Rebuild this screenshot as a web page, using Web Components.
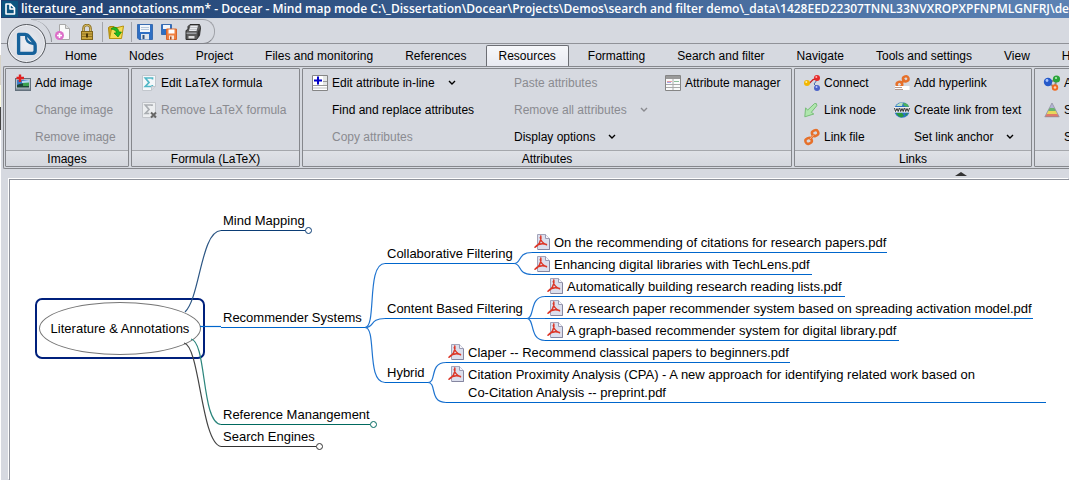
<!DOCTYPE html>
<html lang="en">
<head>
<meta charset="utf-8">
<title>Docear - Mind map mode</title>
<style>
  html, body { margin: 0; height: 100%; overflow: hidden; }
  body { background: #fff; font-family: "Liberation Sans", Arial, sans-serif; font-size: 12px; color: #000; }
</style>
</head>
<body>
<docear-window>
  <title-bar slot="title">literature_and_annotations.mm* - Docear - Mind map mode C:\_Dissertation\Docear\Projects\Demos\search and filter demo\_data\1428EED22307TNNL33NVXROPXPFNPMLGNFRJ\default</title-bar>
  <quick-bar slot="quick"></quick-bar>
  <ribbon-tabs slot="tabs" active="Resources" tabs="Home|Nodes|Project|Files and monitoring|References|Resources|Formatting|Search and filter|Navigate|Tools and settings|View|Help"></ribbon-tabs>

  <ribbon-band slot="ribbon" label="Images" style="--cols: 113px; --pad: 9px">
    <ribbon-item icon="image">Add image</ribbon-item>
    <ribbon-item disabled>Change image</ribbon-item>
    <ribbon-item disabled>Remove image</ribbon-item>
  </ribbon-band>
  <ribbon-band slot="ribbon" label="Formula (LaTeX)" style="--cols: 158px; --pad: 9px">
    <ribbon-item icon="sigma">Edit LaTeX formula</ribbon-item>
    <ribbon-item icon="sigmaoff" disabled>Remove LaTeX formula</ribbon-item>
  </ribbon-band>
  <ribbon-band slot="ribbon" label="Attributes" style="--cols: 182px 171px 126px; --pad: 9px">
    <ribbon-item icon="attr" drop>Edit attribute in-line</ribbon-item>
    <ribbon-item>Find and replace attributes</ribbon-item>
    <ribbon-item disabled>Copy attributes</ribbon-item>
    <ribbon-item disabled>Paste attributes</ribbon-item>
    <ribbon-item disabled drop>Remove all attributes</ribbon-item>
    <ribbon-item drop>Display options</ribbon-item>
    <ribbon-item icon="table">Attribute manager</ribbon-item>
  </ribbon-band>
  <ribbon-band slot="ribbon" label="Links" style="--cols: 90px 137px; --pad: 9px">
    <ribbon-item icon="connect">Connect</ribbon-item>
    <ribbon-item icon="arrow">Link node</ribbon-item>
    <ribbon-item icon="chain">Link file</ribbon-item>
    <ribbon-item icon="hyper">Add hyperlink</ribbon-item>
    <ribbon-item icon="www">Create link from text</ribbon-item>
    <ribbon-item drop>Set link anchor</ribbon-item>
  </ribbon-band>
  <ribbon-band slot="ribbon" label="Nodes" style="--cols: 150px; --pad: 9px">
    <ribbon-item icon="balls">Add connector</ribbon-item>
    <ribbon-item icon="pyramid">Summary node</ribbon-item>
    <ribbon-item>Set cloud</ribbon-item>
  </ribbon-band>

  <mind-map>
    <map-root x="25" y="118">Literature &amp; Annotations</map-root>
    <map-node x="211" y="51" color="#0b3d75" w="84" fold>Mind Mapping</map-node>
    <map-node x="211" y="148" color="#0066cc" w="144">Recommender Systems</map-node>
    <map-node x="211" y="245" color="#00695f" w="147" fold>Reference Manangement</map-node>
    <map-node x="211" y="267" color="#333" w="95" fold>Search Engines</map-node>
    <map-node x="375" y="84" color="#0066cc" w="129">Collaborative Filtering</map-node>
    <map-node x="375" y="139" color="#0066cc" w="142">Content Based Filtering</map-node>
    <map-node x="375" y="203" color="#0066cc" w="43">Hybrid</map-node>
    <map-node x="522" y="73" color="#0066cc" w="355" pdf>On the recommending of citations for research papers.pdf</map-node>
    <map-node x="522" y="95" color="#0066cc" w="280" pdf>Enhancing digital libraries with TechLens.pdf</map-node>
    <map-node x="535" y="117" color="#0066cc" w="300" pdf>Automatically building research reading lists.pdf</map-node>
    <map-node x="535" y="139" color="#0066cc" w="488" pdf>A research paper recommender system based on spreading activation model.pdf</map-node>
    <map-node x="535" y="161" color="#0066cc" w="354" pdf>A graph-based recommender system for digital library.pdf</map-node>
    <map-node x="436" y="183" color="#0066cc" w="344" pdf>Claper -- Recommend classical papers to beginners.pdf</map-node>
    <map-node x="436" y="205" color="#0066cc" w="600" pdf>Citation Proximity Analysis (CPA) - A new approach for identifying related work based on<br>Co-Citation Analysis -- preprint.pdf</map-node>
  </mind-map>
</docear-window>

<script>
const ICONS = {
  logo: `<path stroke="#17629b" stroke-width="2.800" stroke-linejoin="round" d="M3 2h5.500q2 0 3 1.500l4.500 5.500q.8 1 .8 2.500v4q0 2.300-2.300 2.300H3z"/><path stroke="#17629b" stroke-width="2" d="M9.300 3c-.5 4 1.500 6.500 6.500 7"/>`,
  newdoc: `<path fill="#fafafa" stroke="#a8a8a8" d="M4.500.5h6l4 4v11h-10z"/><path fill="#ddd" stroke="#aaa" d="M10.500.5v4h4"/><circle cx="4.500" cy="11.500" r="4.500" fill="#dd6fc8"/><path stroke="#fff" stroke-width="1.600" d="M2 11.500h5M4.500 9v5"/>`,
  lock: `<path stroke="#8a6f22" stroke-width="2.600" d="M4.500 8V4.500a3.500 3.500 0 0 1 7 0V8"/><path stroke="#d9bd63" d="M4.500 8V4.500a3.500 3.500 0 0 1 7 0V8"/><rect x="2.500" y="7.500" width="11" height="8" fill="#c9a53c" stroke="#80651b"/><path stroke="#8f7226" d="M3 10h10M3 12.500h10"/><path stroke="#4a3808" stroke-width="2" d="M8 9.500v4"/>`,
  folder: `<path fill="#d3ab1d" stroke="#a98508" d="M.5 3.500l1.500-1h4l1 1h5v11H1.500z"/><path fill="#f5dc54" stroke="#b8930d" d="M3.500 5l12-3-2 12.500h-12z"/><path fill="#20b820" stroke="#087e10" stroke-width=".6" d="M3 5c3-3 7-2 8 3h2.500L10 13 6 9h2.300c0-2.500-2-3.500-5.300-4z"/>`,
  save: `<path fill="#2e6fc4" stroke="#3a6cb0" d="M.5.5h15v15H2l-1.500-1.500z"/><rect x="3" y="1" width="10" height="7" fill="#f2f6fb"/><path stroke="#b6c7dc" d="M4 3.500h8M4 5.500h8"/><rect x="4" y="10" width="8" height="5.500" fill="#dfe5ec"/><rect x="5.500" y="11" width="2" height="4" fill="#31527e"/>`,
  saveall: `<path fill="#2e6fc4" stroke="#3a6cb0" d="M.5.5h10v10H.5z"/><rect x="2" y="1" width="7" height="4" fill="#f2f6fb"/><path fill="#f08040" stroke="#d8662c" d="M5.500 5h10v10.500h-10z"/><rect x="7.500" y="5.500" width="6" height="4" fill="#fff"/><rect x="8" y="11.500" width="5" height="4" fill="#f8e7dd"/><rect x="9" y="12.500" width="1.500" height="3" fill="#a34a1d"/>`,
  print: `<path fill="#5b5b5b" stroke="#2d2d2d" d="M1 6.500l2-1V2.500l2-2h9.500l1 3-1 8-3 4H1z"/><path fill="#e8eaee" d="M5.500 1.500H13l-1.500 5.500H4z"/><path stroke="#c2c4c8" d="M5 3.500h7M5 5.500h7"/><path fill="#9a9ca0" d="M1.500 8.500h10v1.500h-10z"/><path fill="#ddd" d="M3.500 12h6v2.500h-6z"/><path fill="#333" d="M12.500 8l2-3v6l-2 3z"/>`,
  image: `<rect x=".5" y="3.500" width="15" height="12" fill="#b8c2ca" stroke="#63707c"/><path fill="#3b7cc8" d="M2 5h12v5H2z"/><path fill="#b5daf3" d="M7 6l7-1v3H7z"/><path fill="#1b4638" d="M2 10q5-3 12-1v3.500H2z"/><path fill="#3ba04f" d="M8 8l6-.5V11H8z"/><path fill="#7d8c97" d="M1 13.500h14V15H1z"/><path stroke="#e02020" stroke-width="2.400" d="M1.500 3h7.500M5-.5v7.500"/>`,
  sigma: `<path fill="#f5f8fa" stroke="#c2c7cd" d="M1.500.5h13v11l-4 4h-9z"/><path stroke="#51b7c6" stroke-width="1.700" d="M11.500 4.500V3H4.300L8 7.500l-3.700 4h7V10"/><path fill="#d6dae0" stroke="#c2c7cd" d="M10.500 15.500v-4h4"/>`,
  sigmaoff: `<path fill="#eceef0" stroke="#c2c5ca" d="M1.500.5h13v15h-13z"/><path stroke="#aaaeb2" stroke-width="1.700" d="M11 4V3H4.300L8 7.500l-3.700 4h4"/><path stroke="#666" stroke-width="2" d="M10 10.500l5 5M15 10.500l-5 5"/>`,
  attr: `<path fill="#e4e6e6" stroke="#858585" d="M.5.5h15v15H.5z"/><path stroke="#999" d="M1 10.500h14M1 13h14M11 6.500h4"/><path fill="#fff" d="M1 1h10v9H1zM1 11h14v1.500H1zM1 13.500h14V15H1z"/><path stroke="#0000c8" stroke-width="2" d="M2 5.500h8M6 1.500v8"/>`,
  table: `<path fill="#fafafa" stroke="#858585" d="M.5.5h15v15H.5z"/><path fill="#9a9a9a" d="M1 1h14v3H1z"/><path stroke="#aaa" d="M1 9.500h14M1 12.500h14M8 4v11"/><path stroke="#e9a0a0" d="M2 6.500h5"/><path stroke="#8dbf9b" d="M9 6.500h5"/><path stroke="#a6a6e6" d="M2 7.500h4"/>`,
  connect: `<path stroke="#c22" stroke-width="1.300" d="M3 8.500c5 1 3-5 9-4.500"/><path stroke="#46a" d="M13 5l-3 4 3 3"/><circle cx="3" cy="8" r="3" fill="#f2b600"/><circle cx="2.300" cy="7" r="1" fill="#fff0a0"/><circle cx="13" cy="3" r="3" fill="#e52a2a"/><circle cx="13" cy="13" r="3" fill="#4a62c9"/><circle cx="12.500" cy="12" r="1" fill="#b7c4ff"/><circle cx="12.300" cy="2" r="1" fill="#ffb0b0"/>`,
  arrow: `<path fill="#b0e6ae" stroke="#78bd79" stroke-linejoin="round" d="M.8 14.800l.8-9 2 2.300 7-6.600q2.500-.8 2.200 2.200l-5.500 6.600 2.500 1.700z"/>`,
  chain: `<g stroke="#e6702a" stroke-width="2.400"><rect x="8" y="1.500" width="6.500" height="5.500" rx="2.700" transform="rotate(-25 11 4.500)"/><rect x="1.300" y="9" width="6.500" height="5.500" rx="2.700" transform="rotate(-25 4.800 11.600)"/><path d="M5.500 10.800l5-5.500"/></g><path stroke="#f9b084" d="M5.500 10.500l4.500-5"/>`,
  hyper: `<g stroke="#e6702a" stroke-width="2.400"><rect x="9" y="1.300" width="5.600" height="5" rx="2.500" transform="rotate(-20 12 4)"/><rect x="2.500" y="7" width="5.600" height="5" rx="2.500" transform="rotate(-20 5 9)"/><path d="M6.500 8.500l4.500-4"/></g><path fill="#fff" d="M1 11h14.500v4H1z"/><path stroke="#b79b8f" d="M1 12.500h7M1 14.500h8"/>`,
  www: `<circle cx="8" cy="8" r="7.800" fill="#2b74c4"/><path fill="#b8e0c0" d="M2 4q3-4 7-3.500L8 4H4z"/><path fill="#4db35a" d="M9 1q5 0 6 4l-5-1z"/><path fill="#2a9a3a" d="M2 11h6l2 3-3 1.500q-3-1-5-4.500zM11 12l3-1-2 3z"/><rect y="5" width="16" height="5.600" fill="#eee"/><path stroke="#333" stroke-width="1" d="M.5 6l1 3.500L3 6.500l1.200 3L5.300 6M5.700 6l1 3.500L8 6.500l1.200 3L10.300 6M10.700 6l1 3.500L13 6.500l1.300 3L15.500 6"/>`,
  balls: `<path stroke="#888" stroke-width="2" d="M4 7l8-2-1 8z"/><circle cx="4" cy="7" r="4.200" fill="#2559c9"/><circle cx="12.500" cy="4" r="3.600" fill="#2aa43a"/><circle cx="11" cy="12.500" r="3.200" fill="#ef6a20"/><circle cx="3" cy="5.500" r="1.400" fill="#a9c5ff"/><circle cx="12" cy="3" r="1" fill="#bdf5c2"/><circle cx="11" cy="12.500" r="1.300" fill="#ffd0b0"/>`,
  pyramid: `<path fill="#b3b4d6" d="M8 1l2.500 5h-5z"/><path fill="#6ab56e" d="M5.500 6h5l1.500 3H4z"/><path fill="#e8d75a" d="M4 9h8l1.500 3h-11z"/><path fill="#e07a6a" d="M2.500 12h11l1.500 3H1z"/><path stroke="#8a8a99" stroke-width=".7" d="M8 1L.8 14.800h14.400z"/>`,
  pdf: `<path fill="#dcdfed" stroke="#a3a4ba" d="M3.500.5h8l4 4v11h-12z"/><path stroke="#8586a0" d="M15.500 5v10.500H4"/><path fill="#f6f6fb" stroke="#9a9ab2" d="M11.500.5v4h4"/><path stroke="#dc3526" stroke-width="1.500" stroke-linecap="round" d="M1 13.300c3-1 7-7 5.800-11.300M6.300 3.500c.5 3.500 3 6 6.200 7.200M1.500 12.800c2.500-2.800 6-3.600 10.500-2.500"/>`
};
const icon = (name, size = 16, box = 16) =>
  `<svg width="${size}" height="${size}" viewBox="0 0 ${box} ${box}" fill="none" aria-hidden="true">${ICONS[name] || ''}</svg>`;

const define = (tag, render) => customElements.define(tag, class extends HTMLElement {
  connectedCallback() {
    if (this.shadowRoot) return;
    this.attachShadow({ mode: 'open' }).innerHTML = render(this);
  }
});

define('docear-window', () => `
<style>
  :host { display: flex; height: 100vh; overflow: hidden; background: #fff; }
  .edge { flex: 0 0 1px; background: linear-gradient(#fff 55px, #d8d4c8 55px 85px, #fbfadf 85px 107px, #444 107px 130px, #fff 130px); }
  .frame { flex: 1; min-width: 0; display: flex; flex-direction: column; background: #d6d9e0; }
  header { position: relative; display: flex; flex-direction: column; padding-top: 1px; }
  .app { position: absolute; left: 6px; top: 6px; width: 39px; height: 39px; padding: 0; display: grid; place-items: center;
    border: 1px solid #55585e; border-radius: 50%; background: radial-gradient(#eceef3, #d2d5dd); box-shadow: inset 0 0 0 1px #f2f3f6; }
  .ribbon { display: flex; gap: 2px; margin-left: 2px; padding: 1px; border: 1px solid #85878c; border-right: 0; overflow: hidden; border-radius: 2px 0 0 2px; }
  .split { height: 9px; display: flex; align-items: flex-end; }
  .split button { margin: 0 0 2px 954px; width: 12px; height: 4px; padding: 0; border: 0; background: #333; clip-path: polygon(50% 0, 100% 100%, 0 100%); }
  main { flex: 1; min-height: 0; margin: 1px 0 0 8px; border: solid #8f939c; border-width: 1px 0 0 1px; box-shadow: -1px -1px #fff; background: #fff; overflow: hidden; }
</style>
<div class="edge"></div>
<div class="frame">
  <slot name="title"></slot>
  <header>
    <slot name="quick"></slot>
    <slot name="tabs"></slot>
    <button class="app" aria-label="Application menu">${icon('logo', 24, 20)}</button>
  </header>
  <div class="ribbon"><slot name="ribbon"></slot></div>
  <div class="split"><button aria-label="Collapse toolbar"></button></div>
  <main><slot></slot></main>
</div>`);

define('title-bar', () => `
<style>
  :host { display: flex; align-items: center; gap: 3px; height: 18px; padding-left: 1px; overflow: hidden; white-space: nowrap;
    background: linear-gradient(90deg, #1d3f70, #5c82b4); color: #fff; font: 600 12px/18px "Open Sans", Tahoma, sans-serif; }
  svg { flex: none; background: #0c5580; }
</style>
<svg width="16" height="16" viewBox="0 0 16 16" aria-hidden="true"><path fill="none" stroke="#fff" stroke-width="1.600" stroke-linejoin="round" d="M4 3h4.500l4 4v6H4zM8 3.500V8h4.500"/></svg>
<span><slot></slot></span>`);

define('quick-bar', () => {
  const b = (n, l) => `<button aria-label="${l}">${icon(n)}</button>`;
  return `
<style>
  :host { display: flex; height: 24px; border-bottom: 1px solid #909298; }
  .bar { display: flex; align-items: center; gap: 8px; height: 23px; margin-left: 30px; padding: 0 13px 0 24px; border: 1px solid #a0a2a8; border-left: 0; border-bottom-color: #808288; border-radius: 0 12px 12px 0; position: relative; }
  .bar::before { content: ""; position: absolute; left: 0; top: 0; width: 20px; height: 22px; border-right: 1px solid #909298; border-top-right-radius: 20px 22px; }
  button { border: 0; padding: 0; background: none; display: flex; }
  i { width: 1px; height: 20px; background: #a2a4aa; margin: 0 -3px 0 -1px; }
</style>
<div class="bar">${b('newdoc', 'New')}${b('lock', 'Lock')}<i></i>${b('folder', 'Open')}<i></i>${b('save', 'Save')}${b('saveall', 'Save all')}${b('print', 'Print')}</div>`;
});

define('ribbon-tabs', el => `
<style>
  :host { display: flex; gap: 6px; height: 22px; padding-left: 51px; overflow: hidden; }
  button { flex: none; height: 24px; padding: 0 12px 3px 12px; border: 1px solid transparent; border-width: 1px 1px 0; background: none; font: 12px/18px "Liberation Sans", Arial, sans-serif; margin-top: 1px; border-radius: 2px 2px 0 0; }
  button[aria-selected=true] { border-color: #6c6e74; background: linear-gradient(#f6f7fa, #e6e8f0); }
</style>
${el.getAttribute('tabs').split('|').map(t => `<button role="tab" aria-selected="${t === el.getAttribute('active')}">${t}</button>`).join('')}`);

define('ribbon-band', el => `
<style>
  :host { flex: none; display: flex; flex-direction: column; border: 1px solid #85878c; border-radius: 1px; }
  .items { display: grid; grid-template-rows: repeat(3, 27px); grid-template-columns: var(--cols); grid-auto-flow: column; padding-left: var(--pad); }
  .label { height: 15px; border-top: 1px solid #a5a7ac; background: linear-gradient(#dfe1e6, #d4d7de); text-align: center; line-height: 16px; }
</style>
<div class="items"><slot></slot></div>
<div class="label">${el.getAttribute('label')}</div>`);

define('ribbon-item', el => `
<style>
  :host { display: flex; }
  button { display: flex; align-items: center; gap: 4px; padding: 0; border: 0; background: none; color: #000; white-space: nowrap; font: 12px/16px "Liberation Sans", Arial, sans-serif; }
  button:disabled { color: #8a8b90; }
  svg { flex: none; overflow: visible; }
  .drop { margin-left: 9px; }
</style>
<button ${el.hasAttribute('disabled') ? 'disabled' : ''}>${icon(el.getAttribute('icon'))}<span><slot></slot></span>${
  el.hasAttribute('drop') ? '<svg class="drop" width="8" height="6" viewBox="0 0 8 6" aria-hidden="true"><path fill="none" stroke="currentColor" stroke-width="1.400" d="M1 1l3 3 3-3"/></svg>' : ''}</button>`);

/* Branches share the coordinate space of the nodes placed on the canvas. */
define('mind-map', () => `
<style>
  :host { display: block; position: relative; height: 100%; font-size: 13px; line-height: 18px; }
  svg { position: absolute; left: 0; top: 0; width: 100%; height: 100%; fill: none; stroke: #1f74d0; stroke-width: 1.200; }
</style>
<slot></slot>
<svg aria-hidden="true"><g>
  <path stroke="#2c5684" d="M175 132C190 118 191 51 211 50.500"/>
  <path stroke="#0066cc" d="M190 146.500h21"/>
  <path stroke="#2b857c" d="M181 159C197 162 191 243 211 244.500"/>
  <path stroke="#444" d="M174 163C190 166 191 263 211 266.500"/>
  <path d="M355 147.500C367 147.500 356 83.500 375 83.500"/>
  <path d="M355 147.500C365 147.500 359 138.500 375 138.500"/>
  <path d="M355 147.500C367 147.500 356 202.500 375 202.500"/>
  <path d="M504 83.500C512 83.500 507 72.500 522 72.500M504 83.500C512 83.500 507 94.500 522 94.500"/>
  <path d="M517 138.500C525 138.500 519 116.500 535 116.500M517 138.500h18M517 138.500C525 138.500 519 160.500 535 160.500"/>
  <path d="M418 202.500C427 202.500 419 182.500 436 182.500M418 202.500C427 202.500 419 222.500 436 222.500"/>
</g></svg>`);

define('map-root', el => `
<style>
  :host { position: absolute; left: ${el.getAttribute('x')}px; top: ${el.getAttribute('y')}px; padding: 2px; border: 2px solid #00207c; border-radius: 7px; }
  div { width: 160px; height: 51px; border: 1px solid #777; border-radius: 50%; display: grid; place-items: center; }
</style>
<div><span><slot></slot></span></div>`);

define('map-node', el => {
  const [x, y, w, c] = ['x', 'y', 'w', 'color'].map(n => el.getAttribute(n));
  return `
<style>
  :host { position: absolute; left: ${x}px; top: ${y - 22}px; display: flex; align-items: flex-start; gap: 4px; box-sizing: border-box;
    min-width: ${w}px; padding: 3px 0 0 2px; border-bottom: 1px solid ${c}; white-space: nowrap; }
  svg { flex: none; }
  i { position: absolute; left: 100%; bottom: -4px; width: 5px; height: 5px; border: 1px solid ${c}; border-radius: 50%; background: #fff; }
</style>
${el.hasAttribute('pdf') ? icon('pdf') : ''}<span><slot></slot></span>${el.hasAttribute('fold') ? '<i></i>' : ''}`;
});
</script>
</body>
</html>
